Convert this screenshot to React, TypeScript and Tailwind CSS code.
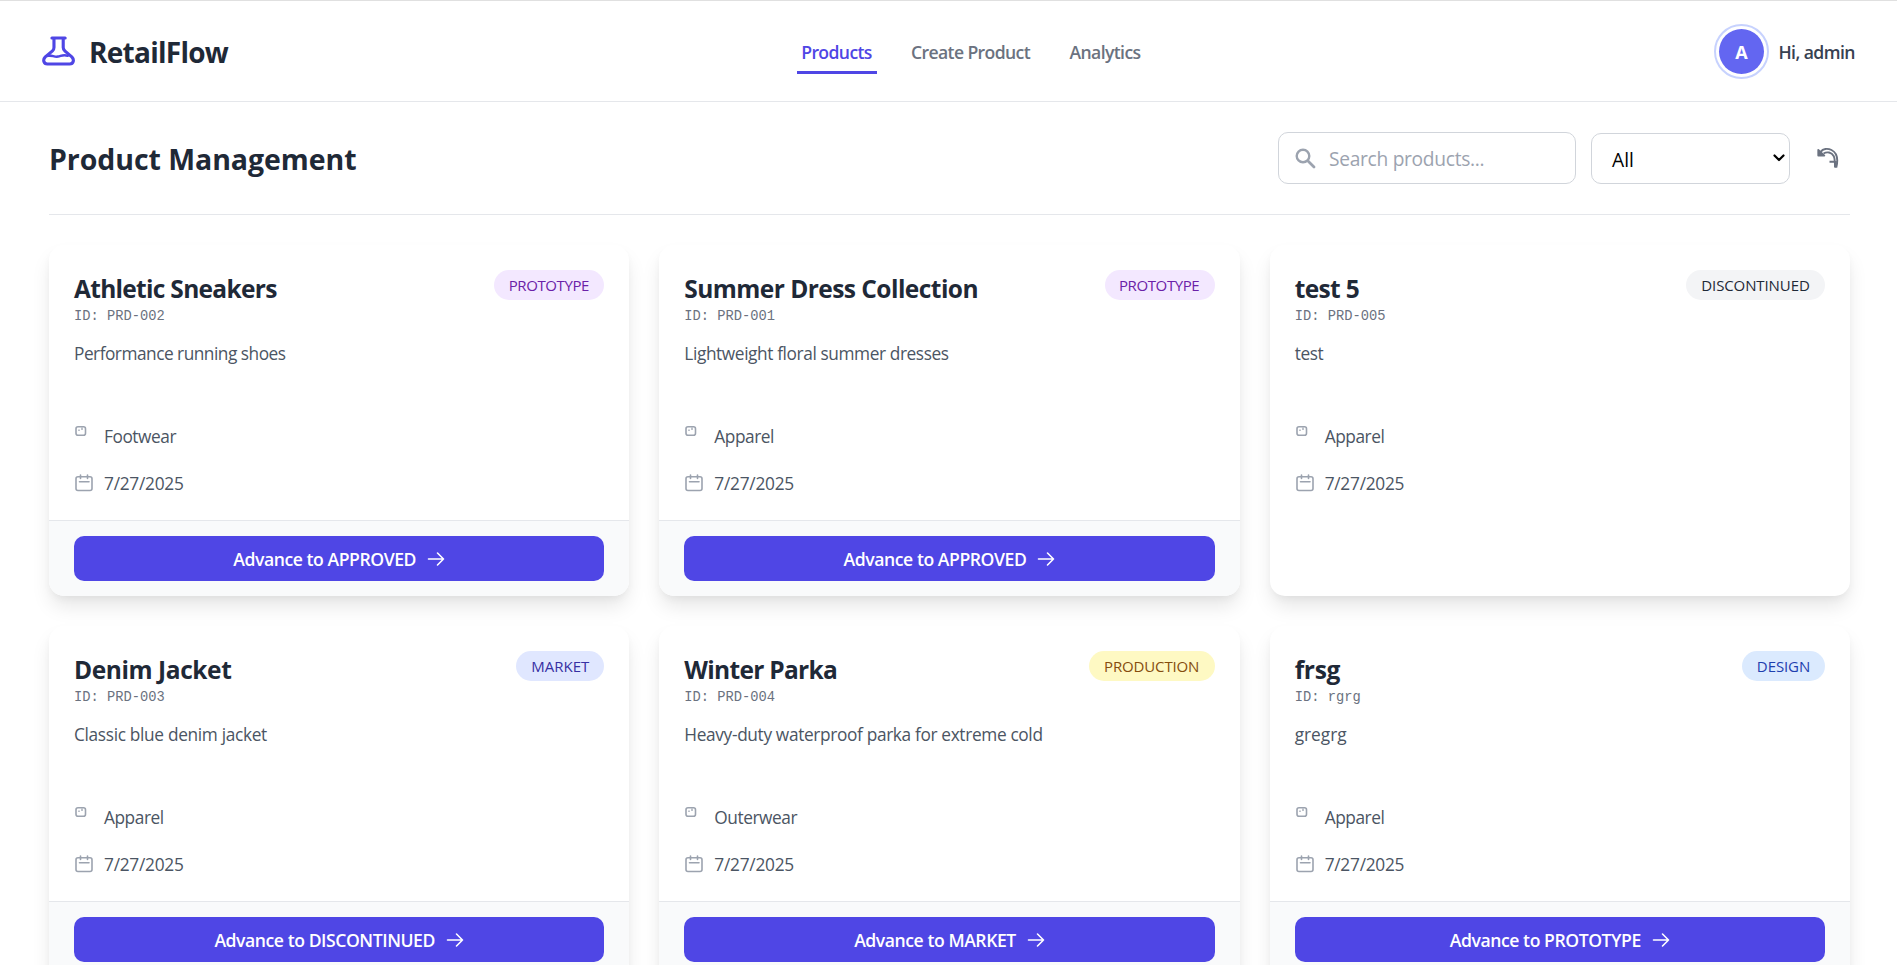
import React from "react";

const statusStyles: Record<string, string> = {
  PROTOTYPE: "w-[110px] pr-[1px] tracking-[-0.4px] bg-[#f3e8ff] text-[#6b21a8]",
  DISCONTINUED: "w-[139px] tracking-[-0.1px] bg-[#f3f4f6] text-[#1f2937]",
  MARKET: "w-[88px] bg-[#e0e7ff] text-[#3730a3]",
  PRODUCTION: "w-[126px] tracking-[-0.15px] bg-[#fef9c3] text-[#854d0e]",
  DESIGN: "w-[83px] tracking-[-0.1px] bg-[#dbeafe] text-[#1e40af]",
};

type Product = {
  name: string;
  nameTracking: string;
  id: string;
  desc: string;
  descTracking: string;
  category: string;
  status: string;
  date: string;
  next?: string;
};

const products: Product[] = [
  { name: "Athletic Sneakers", nameTracking: "tracking-[-0.7px]", id: "PRD-002", desc: "Performance running shoes", descTracking: "tracking-[-0.5px]", category: "Footwear", status: "PROTOTYPE", date: "7/27/2025", next: "APPROVED" },
  { name: "Summer Dress Collection", nameTracking: "tracking-[-0.55px]", id: "PRD-001", desc: "Lightweight floral summer dresses", descTracking: "tracking-[-0.4px]", category: "Apparel", status: "PROTOTYPE", date: "7/27/2025", next: "APPROVED" },
  { name: "test 5", nameTracking: "tracking-[-0.65px]", id: "PRD-005", desc: "test", descTracking: "tracking-[-0.4px]", category: "Apparel", status: "DISCONTINUED", date: "7/27/2025" },
  { name: "Denim Jacket", nameTracking: "tracking-[-0.42px]", id: "PRD-003", desc: "Classic blue denim jacket", descTracking: "tracking-[-0.33px]", category: "Apparel", status: "MARKET", date: "7/27/2025", next: "DISCONTINUED" },
  { name: "Winter Parka", nameTracking: "tracking-[-0.7px]", id: "PRD-004", desc: "Heavy-duty waterproof parka for extreme cold", descTracking: "tracking-[-0.35px]", category: "Outerwear", status: "PRODUCTION", date: "7/27/2025", next: "MARKET" },
  { name: "frsg", nameTracking: "tracking-[-0.3px]", id: "rgrg", desc: "gregrg", descTracking: "tracking-[0px]", category: "Apparel", status: "DESIGN", date: "7/27/2025", next: "PROTOTYPE" },
];

function FlaskIcon() {
  return (
    <svg className="h-[30px] w-[34px]" viewBox="0 0 34 30" fill="none" stroke="#4f46e5" strokeWidth="3.2" strokeLinecap="round" strokeLinejoin="round">
      <path d="M10.200 1.700H23.800M12.300 1.700V11.500Q12.300 13.500 10.800 14.800L3.400 21C0.500 24 1.700 28.300 5.500 28.300H28.500C32.300 28.300 33.500 24 30.600 21L23.400 14.800Q21.800 13.500 21.800 11.500V1.700" />
      <path d="M6 20C10 18.800 12.500 21.500 16.500 20.700C20 20 21.500 18.300 26.500 19.800" strokeWidth="2.6" />
    </svg>
  );
}

function UndoIcon() {
  return (
    <svg className="h-[22px] w-[22px]" viewBox="0 0 22 22" fill="none" stroke="#6b7280" strokeWidth="1.9" strokeLinejoin="round">
      <path d="M3.500 4.800C6 1.800 10.500 1 14.500 3C19.500 5.500 21.500 11.500 19.300 20.500" />
      <path d="M6.500 6.500C10 4.500 14.500 5 16.800 9.200C18 11.500 18 14.500 18 20.500" />
      <path d="M18.800 14V20.500M12.500 14.700H18" />
      <path d="M1.300 3V8.600H7.300Z" fill="#6b7280" />
    </svg>
  );
}

function ProductCard({ p }: { p: Product }) {
  return (
    <article className="flex h-[351px] flex-col overflow-hidden rounded-[15px] bg-white shadow-[0_12px_20px_-2px_rgba(0,0,0,0.1),0_4px_8px_-2px_rgba(0,0,0,0.05)]">
      <div className="flex flex-1 flex-col px-[25px] pt-[25px]">
        <div className="flex h-[57px] justify-between">
          <div>
            <h2 className={"text-[24.5px] leading-[38px] font-bold text-[#1f2937] " + p.nameTracking}>{p.name}</h2>
            <p className="pt-[1px] font-['Liberation_Mono',monospace] text-[13.75px] leading-[16px] text-[#6b7280]">ID: {p.id}</p>
          </div>
          <span className={"flex h-[30px] items-center justify-center rounded-full text-[15px] font-medium " + statusStyles[p.status]}>{p.status}</span>
        </div>
        <p className={"mt-[12px] h-[60px] text-[17.3px] leading-[30px] text-[#4b5563] " + p.descTracking}>{p.desc}</p>
        <div className="mt-[24px] flex h-[28px] text-[17.3px] leading-[28px] tracking-[-0.45px] text-[#4b5563]">
          <span className="w-[30px]">
            <svg className="mt-[2px] h-[12px] w-[13px]" viewBox="0 0 13 12" fill="none" stroke="#9ca3af" strokeWidth="1.6">
              <rect x="2" y="1.800" width="9.500" height="8.500" rx="2" />
              <path d="M8 2.500v2.500M5 4.500v1.500" strokeWidth="1.3" />
            </svg>
          </span>
          {p.category}
        </div>
        <div className="mt-[19px] flex h-[28px] text-[17.3px] leading-[28px] tracking-[-0.25px] text-[#4b5563]">
          <span className="w-[30px]">
            <svg className="mt-[4px] h-[18px] w-[20px]" viewBox="0 0 20 18" fill="none" stroke="#9ca3af" strokeWidth="1.6" strokeLinecap="round">
              <rect x="2" y="2.800" width="16" height="13.700" rx="2" />
              <path d="M6.500 1v3.500M13.500 1v3.500M5.500 7.700h9.500" />
            </svg>
          </span>
          {p.date}
        </div>
      </div>
      {p.next && (
        <footer className="h-[76px] border-t border-[#e5e7eb] bg-[#f9fafb] px-[25px] pt-[15px]">
          <button className="flex h-[45px] w-full items-center justify-center gap-[11px] rounded-[10px] bg-[#4f46e5] text-[17.6px] font-semibold tracking-[-0.44px] text-white">
            <span className="pt-[2px]">Advance to {p.next}</span>
            <svg className="h-[16px] w-[18px]" viewBox="0 0 18 16" fill="none" stroke="white" strokeWidth="1.6" strokeLinecap="round" strokeLinejoin="round">
              <path d="M1.500 8H16.500M10.500 2L16.500 8L10.500 14" />
            </svg>
          </button>
        </footer>
      )}
    </article>
  );
}

export default function App() {
  return (
    <div className="h-[965px] overflow-hidden bg-white font-['Open_Sans',sans-serif]">
      <header className="flex h-[102px] items-center justify-between border-t border-b border-t-[#e0e0e0] border-b-[#e5e7eb] px-[42px]">
        <div className="flex w-[186px] items-center gap-[14px]">
          <FlaskIcon />
          <span className="pt-[2px] text-[28px] font-bold tracking-[-0.75px] whitespace-nowrap text-[#1f2937]">RetailFlow</span>
        </div>
        <nav className="flex gap-[30px] pt-[3px] text-[17.6px] leading-[24px] font-semibold tracking-[-0.62px] whitespace-nowrap text-[#6b7280]">
          <a className="h-[43px] w-[80px] border-b-[3px] border-[#4f46e5] pt-[9px] text-center text-[#4f46e5]">Products</a>
          <a className="h-[43px] w-[128px] pt-[9px] text-center">Create Product</a>
          <a className="h-[43px] w-[81px] pt-[9px] text-center">Analytics</a>
        </nav>
        <div className="flex w-[141px] items-center justify-between">
          <span className="flex h-[55px] w-[55px] shrink-0 rounded-full border-2 border-[#c7d2fe] p-[3px]">
            <span className="flex flex-1 items-center justify-center rounded-full bg-[#6366f1] pt-[2px] text-[18px] font-bold text-white">A</span>
          </span>
          <span className="pt-[3px] text-[17.6px] font-semibold tracking-[-0.55px] whitespace-nowrap text-[#374151]">Hi, admin</span>
        </div>
      </header>
      <main className="ml-[49px] w-[1801px]">
        <div className="flex h-[113px] items-center justify-between border-b border-[#e5e7eb]">
          <h1 className="pt-[3px] text-[28.5px] font-bold tracking-[-0.06px] text-[#1f2937]">Product Management</h1>
          <div className="flex items-center gap-[15px]">
            <label className="flex h-[52px] w-[298px] items-center rounded-[10px] border border-[#d1d5db] pl-[16px]">
              <svg className="h-[21px] w-[21px] shrink-0" viewBox="0 0 21 21" fill="none" stroke="#9ca3af" strokeLinecap="round">
                <circle cx="8" cy="8" r="6.300" strokeWidth="2.4" />
                <path d="M13 13L19 19" strokeWidth="2.8" />
              </svg>
              <input className="ml-[13px] w-[230px] pt-[3px] text-[19.2px] tracking-[-0.3px] outline-none placeholder:text-[#9ca3af]" placeholder="Search products..." />
            </label>
            <div className="flex h-[51px] w-[199px] items-center justify-between rounded-[10px] border border-[#d1d5db] pr-[4px] pl-[20px] text-[19.2px] text-black">
              <span className="pt-[4px]">All</span>
              <svg className="h-[8px] w-[12px]" viewBox="0 0 12 8" fill="none" stroke="black" strokeWidth="2.2" strokeLinecap="round" strokeLinejoin="round">
                <path d="M1.500 1.500L6 6L10.500 1.500" />
              </svg>
            </div>
            <button className="flex h-[45px] w-[45px] items-center justify-center">
              <UndoIcon />
            </button>
          </div>
        </div>
        <div className="mt-[30px] grid grid-cols-3 gap-[30px]">
          {products.map((p) => (
            <ProductCard key={p.id} p={p} />
          ))}
        </div>
      </main>
    </div>
  );
}
